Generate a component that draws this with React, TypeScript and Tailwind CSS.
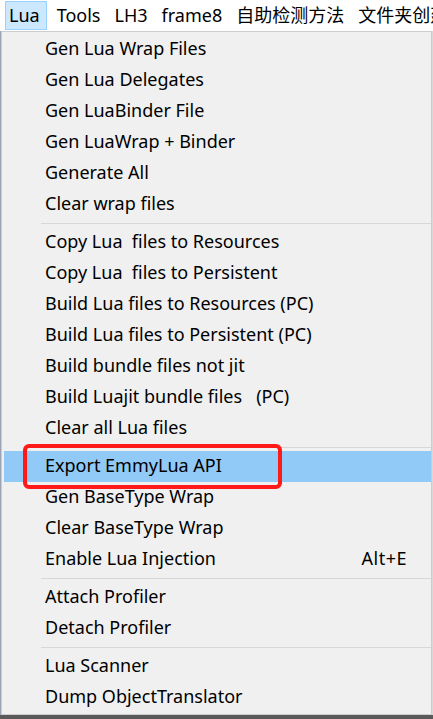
import { Fragment } from 'react';

type Item = { label?: string; shortcut?: string; sep?: boolean; active?: boolean };

const topMenus = ['Lua', 'Tools', 'LH3', 'frame8', '自助检测方法', '文件夹创建'];

const items: Item[] = [
  { label: 'Gen Lua Wrap Files' },
  { label: 'Gen Lua Delegates' },
  { label: 'Gen LuaBinder File' },
  { label: 'Gen LuaWrap + Binder' },
  { label: 'Generate All' },
  { label: 'Clear wrap files' },
  { sep: true },
  { label: 'Copy Lua  files to Resources' },
  { label: 'Copy Lua  files to Persistent' },
  { label: 'Build Lua files to Resources (PC)' },
  { label: 'Build Lua files to Persistent (PC)' },
  { label: 'Build bundle files not jit' },
  { label: 'Build Luajit bundle files   (PC)' },
  { label: 'Clear all Lua files' },
  { sep: true },
  { label: 'Export EmmyLua API', active: true },
  { label: 'Gen BaseType Wrap' },
  { label: 'Clear BaseType Wrap' },
  { label: 'Enable Lua Injection', shortcut: 'Alt+E' },
  { sep: true },
  { label: 'Attach Profiler' },
  { label: 'Detach Profiler' },
  { sep: true },
  { label: 'Lua Scanner' },
  { label: 'Dump ObjectTranslator' },
];

export default function App() {
  return (
    <div
      className="w-[433px] h-[719px] overflow-hidden bg-[#5a5a5a] text-black"
      style={{ fontFamily: '"Noto Sans", "Noto Sans CJK SC", sans-serif' }}
    >
      {/* Menu bar */}
      <div className="h-[31px] bg-white flex items-center whitespace-nowrap text-[18px] pl-[5px] overflow-hidden">
        {topMenus.map((m, i) => (
          <div
            key={m}
            className={`h-[29px] shrink-0 flex items-center pb-[1px] px-[3px] mr-[6px] border ${
              i === 0 ? 'bg-[#cce8ff] border-[#99d1ff] pr-[6px]' : 'border-transparent'
            }`}
          >
            {m}
          </div>
        ))}
      </div>

      <div className="flex h-[684px]">
        <div className="w-[1px] bg-[#9aa6b6]" />
        {/* Dropdown */}
        <div className="w-[431px] h-[684px] border border-[#cccccc] bg-[#f0f0f0] pt-[2px] pl-[2px] text-[18px]">
          {items.map((it, i) =>
            it.sep ? (
              <div key={i} className="h-[7px] flex items-center pl-[37px]">
                <div className="h-px w-full bg-[#d7d7d7]" />
              </div>
            ) : (
              <Fragment key={i}>
                <div
                  className={`relative h-[31px] flex items-center pb-[2px] pl-[41px] pr-[24px] whitespace-nowrap ${
                    it.active ? 'bg-[#91c9f7]' : ''
                  }`}
                >
                  <span className="flex-1 whitespace-pre">{it.label}</span>
                  {it.shortcut && <span className="tracking-[0.5px]">{it.shortcut}</span>}
                  {it.active && (
                    <div className="absolute left-[19px] top-[-7px] w-[259px] h-[45px] border-4 border-[#ff1a1a] rounded-[6px]" />
                  )}
                </div>
              </Fragment>
            )
          )}
        </div>
        <div className="flex-1 bg-[#d9d9d9]" />
      </div>
    </div>
  );
}
